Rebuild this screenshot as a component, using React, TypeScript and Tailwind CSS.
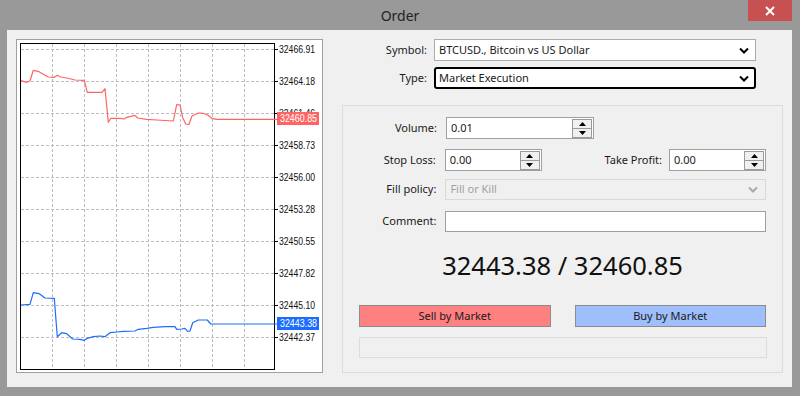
import React from 'react';

const redLine = "21,80.7 26.7,82.3 30,81 33.3,70.3 39,71.7 48.3,77 54.3,77.3 57.3,75.3 60.7,77 66.7,78 75,80 84.3,80.3 87.3,92.3 102,92.3 105,88.7 108.3,122.3 110.7,118.3 120,118.3 124,119 126.7,117.3 135,115.3 137.7,118 146.7,119.3 156.7,120 173.3,121 176.7,104.7 180,105 182.7,117.7 185.7,124 189,124.3 192,116 198.7,113 203.3,113.3 207.7,115 211.7,118.3 216.7,119.3 277,119.3";
const blueLine = "21,305 30,304.3 33.3,292.7 39.3,293.7 45,298 54.3,298.3 57.3,336.7 61.7,332.7 66.7,333.7 72.7,339 80,339.3 84.3,340.3 87.3,338.3 93.3,336.7 100,336 105,336.7 110,332.7 116.7,332 123.3,331.3 135,331 138.3,329.3 146.7,328.3 153.3,327.3 165,326.7 175,326.7 176.7,329.3 181.7,329 185,328.3 187.7,331.3 190,331 192.7,322.7 198.3,320 207.3,320 210.7,324 277,324";

const levels = ["32466.91", "32464.18", "32461.46", "32458.73", "32456.00", "32453.28", "32450.55", "32447.82", "32445.10", "32442.37"];
const vLines = [52.5, 84.5, 116.5, 148.5, 180.5, 212.5, 244.5];

const Chart = () => (
    <div className="w-[307px] h-[334px] border border-[#a0a0a0] bg-white shrink-0">
        <svg width="305" height="332" viewBox="17 40 305 332" style={{fontFamily: '"Liberation Sans", sans-serif'}}>
            {vLines.map(x => (
                <line key={x} x1={x} y1={44} x2={x} y2={369} stroke="#bdbdbd" strokeDasharray="3 2"/>
            ))}
            {levels.map((l, i) => {
                const y = 49.5 + i * 32;
                return (
                    <g key={l}>
                        <line x1={21} y1={y} x2={274} y2={y} stroke="#bdbdbd" strokeDasharray="3 2"/>
                        <line x1={274} y1={y} x2={278} y2={y} stroke="#000"/>
                        <text x={279} y={y + 3.5} fontSize="10" fill="#111" textLength="36" lengthAdjust="spacingAndGlyphs">{l}</text>
                    </g>
                );
            })}
            <rect x={20.5} y={43.5} width={254} height={326} fill="none" stroke="#000"/>
            <polyline points={redLine} fill="none" stroke="#ff6464" strokeWidth="1.2" strokeLinejoin="round"/>
            <polyline points={blueLine} fill="none" stroke="#1c6dff" strokeWidth="1.2" strokeLinejoin="round"/>
            <rect x={277} y={112} width={42} height={13} fill="#ff6464"/>
            <text x={280} y={122} fontSize="10" fill="#fff" textLength="37" lengthAdjust="spacingAndGlyphs">32460.85</text>
            <rect x={277} y={317} width={42} height={13} fill="#1c6dff"/>
            <text x={280} y={327} fontSize="10" fill="#fff" textLength="37" lengthAdjust="spacingAndGlyphs">32443.38</text>
        </svg>
    </div>
);

const Chevron = ({color = "#000"}: {color?: string}) => (
    <svg width="10" height="7" viewBox="0 0 10 7">
        <path d="M1 1.5 L5 5.5 L9 1.5" fill="none" stroke={color} strokeWidth="2"/>
    </svg>
);

const Spinner = () => (
    <div className="w-[20px] h-[19px] mr-[1px] border border-[#9a9a9a] bg-[#f0f0f0] flex flex-col">
        <div className="flex-1 flex items-center justify-center border-b border-[#9a9a9a]">
            <svg width="7" height="4" viewBox="0 0 7 4"><path d="M0 4 L3.5 0 L7 4 Z" fill="#000"/></svg>
        </div>
        <div className="flex-1 flex items-center justify-center">
            <svg width="7" height="4" viewBox="0 0 7 4"><path d="M0 0 L3.5 4 L7 0 Z" fill="#000"/></svg>
        </div>
    </div>
);

const SpinInput = ({value, width}: {value: string, width: string}) => (
    <div className={`${width} h-[22px] border border-[#a0a0a0] bg-white flex items-center justify-between pl-[4px]`}>
        <span>{value}</span>
        <Spinner/>
    </div>
);

export default function App() {
    return (
        <div className="w-[800px] h-[396px] bg-[#999999] flex flex-col text-[11px] text-[#1a1a1a]"
             style={{fontFamily: '"Noto Sans", "Open Sans", sans-serif'}}>
            <div className="h-[30px] relative flex items-center justify-center shrink-0">
                <span className="text-[14px] text-[#222]">Order</span>
                <button className="absolute top-0 left-[748px] w-[44px] h-[21px] bg-[#c75050] flex items-center justify-center">
                    <svg width="10" height="10" viewBox="0 0 10 10">
                        <path d="M1 1 L9 9 M9 1 L1 9" stroke="#fff" strokeWidth="2"/>
                    </svg>
                </button>
            </div>
            <div className="ml-[7px] w-[785px] h-[357px] bg-[#f0f0f0] flex pl-[9px] pt-[9px]">
                <Chart/>
                <div className="ml-[19px] w-[441px] flex flex-col">
                    <div className="flex items-center h-[22px]">
                        <span className="w-[85px] text-right">Symbol:</span>
                        <div className="ml-[7px] w-[322px] h-[22px] border border-[#acacac] bg-white flex items-center justify-between pl-[4px] pr-[6px]">
                            <span>BTCUSD., Bitcoin vs US Dollar</span>
                            <Chevron/>
                        </div>
                    </div>
                    <div className="flex items-center h-[22px] mt-[6px]">
                        <span className="w-[85px] text-right">Type:</span>
                        <div className="ml-[7px] w-[322px] h-[22px] border-2 border-black rounded-[3px] bg-white flex items-center justify-between pl-[3px] pr-[5px]">
                            <span>Market Execution</span>
                            <Chevron/>
                        </div>
                    </div>
                    <div className="mt-[16px] w-[441px] h-[268px] border border-[#dcdcdc] flex flex-col pt-[11px] px-[16px]">
                        <div className="flex items-center h-[22px]">
                            <span className="w-[78px] text-right">Volume:</span>
                            <div className="ml-[9px]"><SpinInput value="0.01" width="w-[148px]"/></div>
                        </div>
                        <div className="flex items-center h-[22px] mt-[10px]">
                            <span className="w-[78px] text-right">Stop Loss:</span>
                            <div className="ml-[9px]"><SpinInput value="0.00" width="w-[97px]"/></div>
                            <span className="w-[122px] text-right">Take Profit:</span>
                            <div className="ml-[7px]"><SpinInput value="0.00" width="w-[97px]"/></div>
                        </div>
                        <div className="flex items-center h-[21px] mt-[8px]">
                            <span className="w-[78px] text-right">Fill policy:</span>
                            <div className="ml-[9px] w-[323px] h-[21px] border border-[#d9d9d9] bg-[#f0f0f0] flex items-center justify-between pl-[4px] pr-[7px] text-[#a0a0a0]">
                                <span>Fill or Kill</span>
                                <Chevron color="#a8a8a8"/>
                            </div>
                        </div>
                        <div className="flex items-center h-[21px] mt-[11px]">
                            <span className="w-[78px] text-right">Comment:</span>
                            <div className="ml-[9px] w-[323px] h-[21px] border border-[#a0a0a0] bg-white"></div>
                        </div>
                        <div className="mt-[17px] h-[32px] flex items-center justify-center text-[25.5px] text-[#111]">
                            32443.38 / 32460.85
                        </div>
                        <div className="mt-[24px] flex gap-[24px]">
                            <button className="w-[192px] h-[22px] bg-[#ff8080] border border-[#8c8c8c] text-[11px] text-[#1a1a1a]">Sell by Market</button>
                            <button className="w-[192px] h-[22px] bg-[#9ebefc] border border-[#8c8c8c] text-[11px] text-[#1a1a1a]">Buy by Market</button>
                        </div>
                        <div className="mt-[10px] w-[408px] h-[21px] border border-[#dcdcdc]"></div>
                    </div>
                </div>
            </div>
        </div>
    );
}
